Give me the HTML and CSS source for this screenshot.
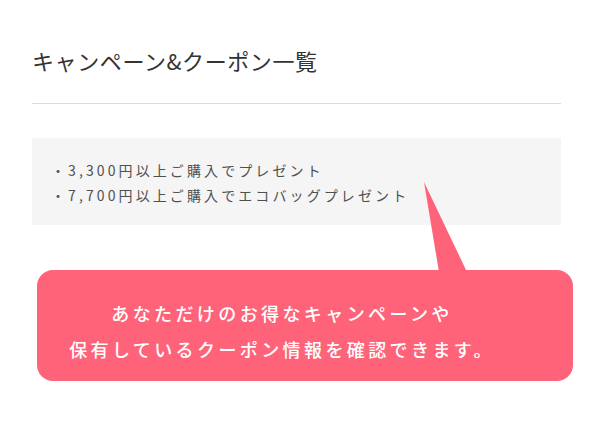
FILE: index.html
```html
<!DOCTYPE html>
<html lang="ja">
<head>
<meta charset="utf-8">
<link rel="stylesheet" href="styles.css">
</head>
<body>
<main class="page">
  <h1 class="title">キャンペーン&amp;クーポン一覧</h1>
  <div class="info">
    <p class="item">・3,300円以上ご購入でプレゼント</p>
    <p class="item">・7,700円以上ご購入でエコバッグプレゼント</p>
  </div>
  <div class="bubble">
    <svg class="tail" width="50" height="92" viewBox="0 0 50 92"><polygon points="1,0 16,90 44,90" fill="#ff6379"/></svg>
    <p class="bubble-text">あなただけのお得なキャンペーンや<br>保有しているクーポン情報を確認できます。</p>
  </div>
</main>
</body>
</html>
```
FILE: styles.css
```css
html, body {
  margin: 0;
  padding: 0;
  background: #fff;
}
body {
  font-family: "Noto Sans CJK JP", "Noto Sans", sans-serif;
  color: #333;
  width: 600px;
  height: 437px;
  overflow: hidden;
}
.page {
  position: relative;
  padding: 45px 39px 0 32px;
}
.title {
  margin: 0;
  font-size: 22px;
  font-weight: 400;
  line-height: 30px;
  letter-spacing: 0.6px;
  padding-bottom: 28px;
  border-bottom: 1px solid #dcdcdc;
  color: #333;
}
.info {
  margin-top: 34px;
  background: #f5f5f5;
  padding: 20px 20px 17px 19px;
}
.item {
  margin: 0;
  font-size: 14px;
  font-weight: 400;
  line-height: 25px;
  letter-spacing: 3.1px;
  color: #505050;
}
.bubble {
  position: absolute;
  left: 37px;
  top: 270px;
  width: 536px;
  height: 111px;
  background: #ff6379;
  border-radius: 16px;
  display: flex;
  align-items: center;
  justify-content: center;
}
.tail {
  position: absolute;
  left: 386px;
  top: -88px;
}
.bubble-text {
  margin: 0;
  padding: 10px 46px 0 0;
  color: #fff;
  font-size: 18px;
  font-weight: 500;
  line-height: 36px;
  letter-spacing: 3.4px;
  text-align: center;
}
```
